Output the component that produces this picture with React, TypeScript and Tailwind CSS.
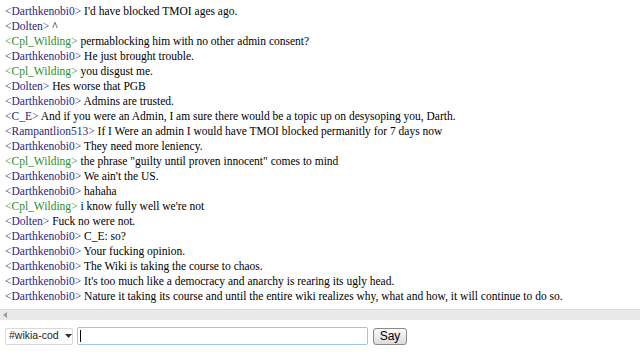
import React from "react";

const lines: [string, string][] = [
  ["Darthkenobi0", "I'd have blocked TMOI ages ago."],
  ["Dolten", "^"],
  ["Cpl_Wilding", "permablocking him with no other admin consent?"],
  ["Darthkenobi0", "He just brought trouble."],
  ["Cpl_Wilding", "you disgust me."],
  ["Dolten", "Hes worse that PGB"],
  ["Darthkenobi0", "Admins are trusted."],
  ["C_E", "And if you were an Admin, I am sure there would be a topic up on desysoping you, Darth."],
  ["Rampantlion513", "If I Were an admin I would have TMOI blocked permanitly for 7 days now"],
  ["Darthkenobi0", "They need more leniency."],
  ["Cpl_Wilding", "the phrase \"guilty until proven innocent\" comes to mind"],
  ["Darthkenobi0", "We ain't the US."],
  ["Darthkenobi0", "hahaha"],
  ["Cpl_Wilding", "i know fully well we're not"],
  ["Dolten", "Fuck no were not."],
  ["Darthkenobi0", "C_E: so?"],
  ["Darthkenobi0", "Your fucking opinion."],
  ["Darthkenobi0", "The Wiki is taking the course to chaos."],
  ["Darthkenobi0", "It's too much like a democracy and anarchy is rearing its ugly head."],
  ["Darthkenobi0", "Nature it taking its course and until the entire wiki realizes why, what and how, it will continue to do so."],
];

export default function App() {
  return (
    <div className="w-[640px] h-[363px] bg-white overflow-hidden flex flex-col" style={{ fontFamily: '"Liberation Serif", serif' }}>
      <div className="h-[309px] shrink-0 overflow-hidden pl-[5px] pt-[4px] text-[11.5px] leading-[15px] text-black">
        {lines.map(([n, t], i) => (
          <div key={i} className="whitespace-nowrap">
            <span className={n === "Cpl_Wilding" ? "text-[#2e8b2e]" : "text-[#28287a]"}>&lt;{n}&gt;</span> {t}
          </div>
        ))}
      </div>
      <div className="h-[11px] shrink-0 bg-[#e9e9e9] border-t border-[#dcdcdc] flex items-center pl-[3px]">
        <svg width="4" height="6" viewBox="0 0 4 6"><path d="M4 0 L0 3 L4 6 Z" fill="#9a9a9a" /></svg>
      </div>
      <div className="flex items-center gap-[4px] pl-[5px] pt-[7px]" style={{ fontFamily: '"Liberation Sans", Arial, sans-serif' }}>
        <div className="w-[68px] h-[17px] border border-[#d8d8d8] rounded-[2px] flex items-center pl-[3px] text-[10.5px] text-[#222] whitespace-nowrap">
          <span className="w-[52px]">#wikia-cod</span>
          <svg width="7" height="4" viewBox="0 0 7 4" className="ml-[4px]"><path d="M0 0 H7 L3.5 4 Z" fill="#333" /></svg>
        </div>
        <div className="w-[291px] h-[18px] border border-[#9ec4e6] rounded-[2px] flex items-center pl-[2px]">
          <div className="w-[1px] h-[12px] bg-black" />
        </div>
        <button className="ml-[1px] w-[34px] h-[17px] border border-[#8a8a8a] rounded-[3px] bg-gradient-to-b from-[#fafafa] to-[#dcdcdc] text-[12px] text-black leading-none flex items-center justify-center">
          Say
        </button>
      </div>
    </div>
  );
}
